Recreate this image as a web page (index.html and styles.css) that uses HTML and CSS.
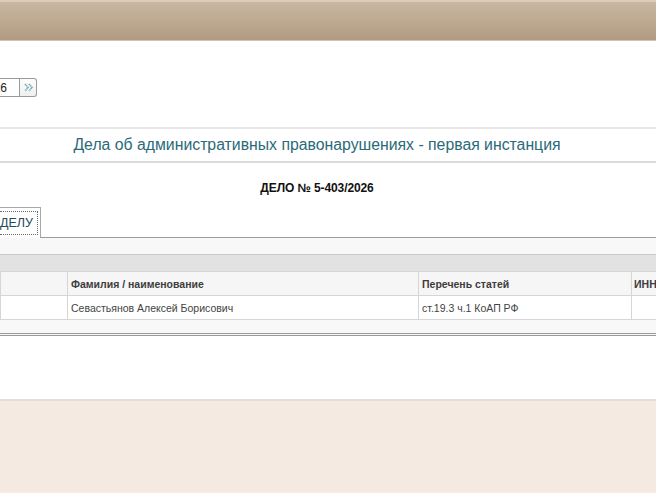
FILE: index.html
```html
<!DOCTYPE html>
<html lang="ru">
  <head>
    <meta charset="UTF-8" />
    <meta name="viewport" content="width=device-width, initial-scale=1.0" />
    <title>Дело</title>
    <link rel="stylesheet" href="styles.css">
  </head>
  <body>
    <div class="top"></div>
    <div class="search">
      <input class="search__input" type="text" value="5-403/2026" />
      <a class="search__btn">
        <svg width="11" height="11" viewBox="0 0 11 11">
          <path d="M2 2 L5 5.5 L2 9 M6 2 L9 5.5 L6 9" fill="none" stroke="#6fa8b0" stroke-width="1.6" stroke-dasharray="1.2 0.6" />
        </svg>
      </a>
    </div>
    <div class="title">Дела об административных правонарушениях - первая инстанция</div>
    <div class="case">ДЕЛО № 5-403/2026</div>
    <div class="tabs">
      <div class="tabs__tab"><span class="tabs__link">ДЕЛУ</span></div>
    </div>
    <div class="panel">
      <div class="panel__bar"></div>
      <table class="grid">
        <tr>
          <th class="grid__c1"></th>
          <th class="grid__c2">Фамилия / наименование</th>
          <th class="grid__c3">Перечень статей</th>
          <th class="grid__c4">ИНН</th>
        </tr>
        <tr>
          <td></td>
          <td>Севастьянов Алексей Борисович</td>
          <td>ст.19.3 ч.1 КоАП РФ</td>
          <td></td>
        </tr>
      </table>
    </div>
    <div class="blank"></div>
    <div class="footer"></div>
  </body>
</html>
```

FILE: styles.css
```css
* {
  box-sizing: border-box;
}
body {
  margin: 0;
  font-family: "Liberation Sans", Arial, sans-serif;
  background: #fff;
  overflow: hidden;
}

.top {
  height: 41px;
  border-top: 2px solid #dccbb9;
  border-bottom: 1px solid #cfc3b3;
  background: linear-gradient(#cbb6a1, #b09b82);
}

.search {
  display: flex;
  height: 86px;
  padding-top: 37px;
}
.search__input {
  width: 20px;
  height: 19px;
  margin: 0;
  padding: 0 12px 0 0;
  border: 1px solid #9a9a9a;
  border-left: none;
  border-radius: 0;
  font-family: "Liberation Sans", Arial, sans-serif;
  font-size: 12px;
  text-align: right;
  direction: rtl;
  color: #222;
  background: #fff;
  outline: none;
}
.search__btn {
  display: flex;
  align-items: center;
  justify-content: center;
  width: 17px;
  height: 19px;
  border: 1px solid #9a9a9a;
  border-left: none;
  border-radius: 0 3px 3px 0;
  background: linear-gradient(#fdfdfd, #eef0f0);
}

.title {
  height: 36px;
  border-top: 2px solid #e6e6e6;
  border-bottom: 2px solid #dadada;
  padding-right: 22px;
  text-align: center;
  font-size: 15.8px;
  line-height: 32px;
  color: #2b6a78;
}

.case {
  height: 44px;
  padding-top: 18px;
  padding-right: 22px;
  text-align: center;
  font-size: 12px;
  font-weight: bold;
  letter-spacing: -0.1px;
  color: #111;
}

.tabs {
  display: flex;
  height: 31px;
  border-bottom: 1px solid #9c9c9c;
}
.tabs__tab {
  width: 41px;
  height: 31px;
  margin-bottom: -1px;
  padding: 3px 2px 2px 0;
  border: 1px solid #a8a8a8;
  border-left: none;
  border-bottom: none;
  background: #fff;
}
.tabs__link {
  display: block;
  height: 24px;
  border: 1px dotted #6a6a6a;
  border-left: none;
  font-size: 12.5px;
  line-height: 22px;
  color: #234a58;
}

.panel {
  padding-top: 16px;
  background: #f8f8f8;
  border-bottom: 3px double #999;
  padding-bottom: 13px;
}
.panel__bar {
  height: 17px;
  border-top: 1px solid #c9c9c9;
  background: #e2e2e2;
}

.grid {
  width: 700px;
  border-collapse: collapse;
  font-size: 10.5px;
  color: #444;
}
.grid th,
.grid td {
  height: 24px;
  padding: 0 3px;
  border: 1px solid #d6d6d6;
  text-align: left;
}
.grid th {
  background: #f6f6f6;
  font-weight: bold;
  color: #3d3d3d;
}
.grid td {
  background: #fff;
}
.grid__c1 {
  width: 67px;
}
.grid__c2 {
  width: 351px;
}
.grid__c3 {
  width: 213px;
}
.grid th.grid__c4 {
  padding-left: 2px;
}

.blank {
  height: 65px;
  border-bottom: 2px solid #e3dedb;
}
.footer {
  height: 100px;
  background: #f4eae1;
}
```
